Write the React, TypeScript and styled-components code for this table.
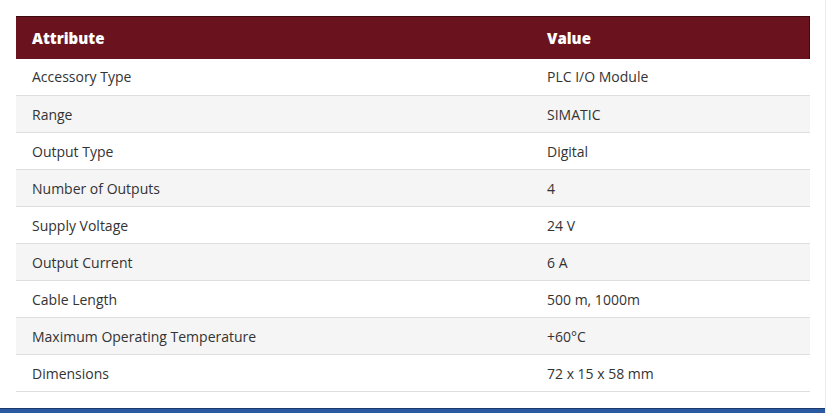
import * as React from "react";
import styled, { createGlobalStyle } from "styled-components";

const rows: [string, string][] = [
    ["Accessory Type", "PLC I/O Module"],
    ["Range", "SIMATIC"],
    ["Output Type", "Digital"],
    ["Number of Outputs", "4"],
    ["Supply Voltage", "24 V"],
    ["Output Current", "6 A"],
    ["Cable Length", "500 m, 1000m"],
    ["Maximum Operating Temperature", "+60°C"],
    ["Dimensions", "72 x 15 x 58 mm"],
];

const App = (): JSX.Element => (
    <Frame>
        <GlobalStyle />
        <Content>
            <Table>
                <thead>
                    <tr>
                        <HeadCell $first>Attribute</HeadCell>
                        <HeadCell>Value</HeadCell>
                    </tr>
                </thead>
                <tbody>
                    {rows.map(([name, value], i) => (
                        <Row key={name} $odd={i % 2 === 1}>
                            <Cell $first>{name}</Cell>
                            <Cell>{value}</Cell>
                        </Row>
                    ))}
                </tbody>
            </Table>
        </Content>
        <BottomBar />
    </Frame>
);

export default App;

const GlobalStyle = createGlobalStyle`
    html, body {
        margin: 0;
        padding: 0;
        background: #ffffff;
        font-family: "Open Sans", "Noto Sans", sans-serif;
    }
`;

const Frame = styled.div`
    width: 825px;
    height: 413px;
    border-right: 1px solid #ececec;
    display: flex;
    flex-direction: column;
    overflow: hidden;
`;

const Content = styled.div`
    flex: 1;
    padding: 16px 15px 0 16px;
`;

const Table = styled.table`
    width: 794px;
    border-collapse: collapse;
    table-layout: fixed;
`;

const HeadCell = styled.th<{ $first?: boolean }>`
    width: ${p => (p.$first ? "515px" : "auto")};
    height: 42px;
    padding: 0 16px;
    box-sizing: border-box;
    background: #6a131f;
    color: #ffffff;
    font-size: 15px;
    font-weight: 800;
    text-align: left;
    border-top: 1px solid #3d0a12;
    border-right: ${p => (p.$first ? "none" : "1px solid #3d0a12")};
`;

const Row = styled.tr<{ $odd: boolean }>`
    background: ${p => (p.$odd ? "#f5f5f5" : "#ffffff")};
    border-bottom: 1px solid #dedede;
`;

const Cell = styled.td<{ $first?: boolean }>`
    height: 37px;
    padding: 0 16px;
    box-sizing: border-box;
    color: #333333;
    font-size: 14px;
    font-weight: 400;
`;

const BottomBar = styled.div`
    height: 4px;
    background: #2c5aa0;
    border-top: 1px solid #1b3a6e;
    flex-shrink: 0;
`;
